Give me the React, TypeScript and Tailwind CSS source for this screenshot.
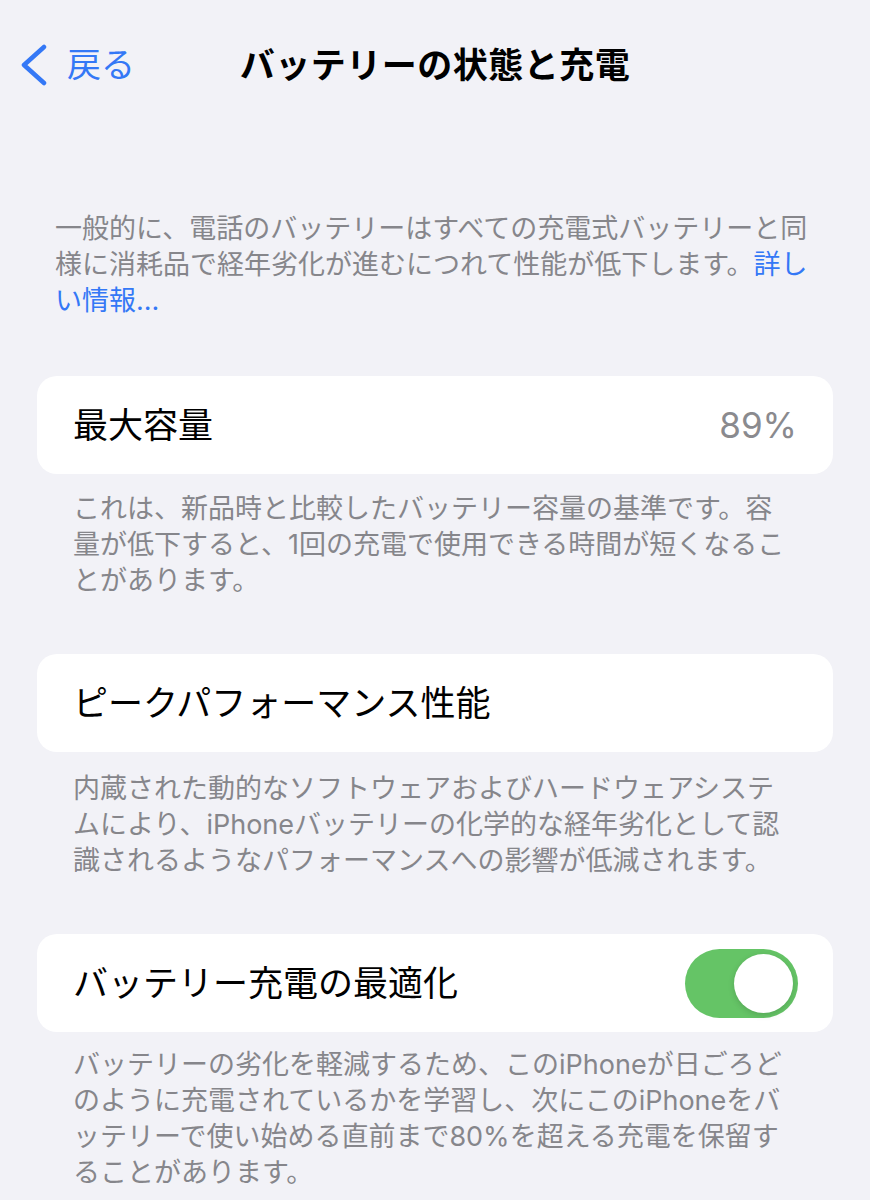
export default function App() {
  return (
    <main className="min-h-screen w-full bg-[#f2f2f7] pb-10 font-['Inter','Noto_Sans_CJK_JP',sans-serif] text-black">
      <header className="grid h-[130px] grid-cols-[1fr_auto_1fr] items-center">
        <button className="flex items-center gap-[20px] pl-[20px] text-[#3478f6]">
          <svg width="27" height="42" viewBox="0 0 27 42" fill="none">
            <path d="M24 3 L4 21 L24 39" stroke="#3478f6" strokeWidth="4.5" strokeLinecap="round" strokeLinejoin="round" />
          </svg>
          <span className="text-[34px] leading-none">戻る</span>
        </button>
        <h1 className="text-[35px] font-bold leading-none tracking-[0.5px]">バッテリーの状態と充電</h1>
        <div />
      </header>

      <p className="mt-[81px] whitespace-nowrap px-[55px] text-[27px] leading-[36px] text-[#86868b]">
        一般的に、電話のバッテリーはすべての充電式バッテリーと同
        <br />
        様に消耗品で経年劣化が進むにつれて性能が低下します。
        <a className="text-[#3478f6]">
          詳し
          <br />
          い情報...
        </a>
      </p>

      <div className="mx-[37px] mt-[57px] flex h-[98px] items-center justify-between rounded-[20px] bg-white px-[36px]">
        <span className="text-[35px]">最大容量</span>
        <span className="text-[35px] text-[#8a8a8e]">89%</span>
      </div>
      <p className="mt-[17px] whitespace-nowrap px-[73px] text-[27px] leading-[36px] text-[#86868b]">
        これは、新品時と比較したバッテリー容量の基準です。容
        <br />
        量が低下すると、1回の充電で使用できる時間が短くなるこ
        <br />
        とがあります。
      </p>

      <div className="mx-[37px] mt-[55px] flex h-[98px] items-center rounded-[20px] bg-white px-[36px]">
        <span className="text-[35px]">ピークパフォーマンス性能</span>
      </div>
      <p className="mt-[19px] whitespace-nowrap px-[73px] text-[27px] leading-[36px] text-[#86868b]">
        内蔵された動的なソフトウェアおよびハードウェアシステ
        <br />
        ムにより、iPhoneバッテリーの化学的な経年劣化として認
        <br />
        識されるようなパフォーマンスへの影響が低減されます。
      </p>

      <div className="mx-[37px] mt-[55px] flex h-[98px] items-center justify-between rounded-[20px] bg-white pl-[36px] pr-[35px]">
        <span className="text-[35px]">バッテリー充電の最適化</span>
        <div className="flex h-[69px] w-[113px] items-center justify-end rounded-full bg-[#65c466] pr-[5px]">
          <div className="h-[59px] w-[59px] rounded-full bg-white shadow-[0_2px_6px_rgba(0,0,0,0.15)]" />
        </div>
      </div>
      <p className="mt-[15px] whitespace-nowrap px-[73px] text-[27px] leading-[36px] text-[#86868b]">
        バッテリーの劣化を軽減するため、このiPhoneが日ごろど
        <br />
        のように充電されているかを学習し、次にこのiPhoneをバ
        <br />
        ッテリーで使い始める直前まで80%を超える充電を保留す
        <br />
        ることがあります。
      </p>
    </main>
  );
}
